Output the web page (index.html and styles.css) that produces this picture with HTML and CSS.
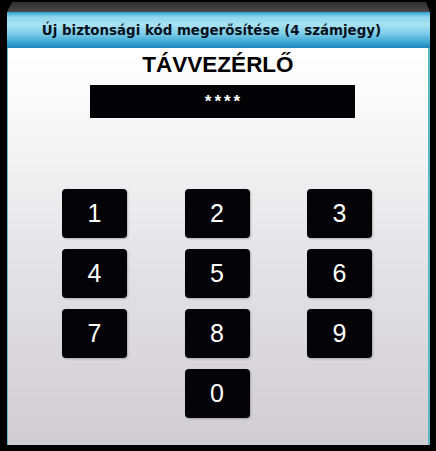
FILE: index.html
```html
<!DOCTYPE html>
<html lang="hu">
<head>
<meta charset="utf-8">
<title>Biztonsági kód</title>
<link rel="stylesheet" href="styles.css">
</head>
<body>
  <div class="frame">
    <div class="bevel"></div>
    <div class="header">Új biztonsági kód megerősítése (4 számjegy)</div>
    <div class="panel">
      <div class="title">TÁVVEZÉRLŐ</div>
      <div class="code">****</div>
      <div class="keypad">
        <div class="key">1</div>
        <div class="key">2</div>
        <div class="key">3</div>
        <div class="key">4</div>
        <div class="key">5</div>
        <div class="key">6</div>
        <div class="key">7</div>
        <div class="key">8</div>
        <div class="key">9</div>
        <div class="key key-zero">0</div>
      </div>
    </div>
  </div>
</body>
</html>
```

FILE: styles.css
```css
html, body {
  margin: 0;
  padding: 0;
  background: #000;
}

.frame {
  width: 436px;
  height: 451px;
  box-sizing: border-box;
  padding: 2px 6px 6px 7px;
  display: flex;
  flex-direction: column;
}

/* dark bevelled lip above the title bar */
.bevel {
  height: 10px;
  background: linear-gradient(#2e2e2e, #4a4a4a);
  clip-path: polygon(5px 0, calc(100% - 4px) 0, 100% 100%, 0 100%);
}

.header {
  height: 36px;
  display: flex;
  align-items: center;
  justify-content: center;
  padding-right: 14px;
  font-family: "DejaVu Sans", sans-serif;
  font-weight: bold;
  font-size: 13.4px;
  color: #07101a;
  background: linear-gradient(#2b9fcd 0%, #8fd7ee 14%, #a9e2f2 35%, #7ccde9 60%, #3aa4d0 85%, #1a86ba 100%);
}

.panel {
  flex: 1;
  border-left: 1px solid #5fb6c4;
  border-right: 2px solid #5fb6c4;
  background: linear-gradient(#ffffff 0%, #f4f4f5 25%, #e3e2e4 55%, #cfcdd0 100%);
  display: flex;
  flex-direction: column;
  padding-top: 4px;
}

.title {
  text-align: center;
  font-family: "Liberation Sans", Arial, sans-serif;
  font-weight: bold;
  font-size: 22.5px;
  line-height: 25px;
  color: #000;
}

.code {
  margin: 8px 0 0 82px;
  width: 265px;
  height: 33px;
  background: #030205;
  color: #fff;
  display: flex;
  align-items: center;
  justify-content: center;
  font-family: "Liberation Sans", Arial, sans-serif;
  font-weight: bold;
  font-size: 17px;
  letter-spacing: 3px;
  padding-left: 3px;
  box-sizing: border-box;
}

.keypad {
  margin: 71px 0 0 54px;
  display: grid;
  grid-template-columns: repeat(3, 65px);
  grid-auto-rows: 49px;
  column-gap: 57.5px;
  row-gap: 11px;
}

.key {
  background: #040307;
  border-radius: 4px;
  box-shadow: 1px 1px 2px rgba(110, 110, 110, 0.45);
  color: #fff;
  display: flex;
  align-items: center;
  justify-content: center;
  font-family: "Liberation Sans", Arial, sans-serif;
  font-size: 25px;
}

.key-zero {
  grid-column: 2;
}
```
